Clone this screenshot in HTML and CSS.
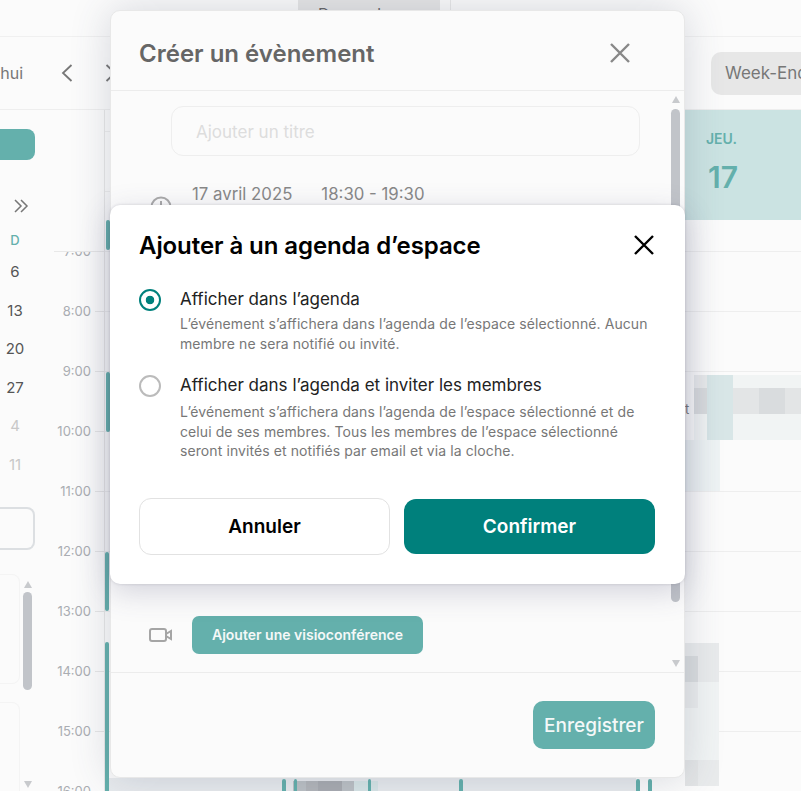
FILE: index.html
```html
<!DOCTYPE html>
<html lang="fr">
<head>
    <meta charset="UTF-8">
    <meta name="viewport" content="width=device-width, initial-scale=1.0">
    <title>Créer un évènement</title>
    <link rel="stylesheet" href="styles.css">
</head>
<body>
    <div class="app">
        <header class="topbar">
            <div class="top-btn">Demander</div>
            <div class="top-divider"></div>
        </header>
        <div class="toolbar">
            <div class="today-clip"><span>Aujourd’hui</span></div>
            <svg class="nav-chevron" width="12" height="18" viewBox="0 0 12 18"><path d="M10.5 1 2 9l8.5 8"/></svg>
            <svg class="nav-chevron" width="12" height="18" viewBox="0 0 12 18"><path d="M1.5 1 10 9l-8.5 8"/></svg>
            <div class="view-btn">Week-End</div>
        </div>
        <div class="main">
            <aside class="sidebar">
                <div class="side-new"></div>
                <svg class="side-next" width="15" height="14" viewBox="0 0 15 14"><path d="M1 1l6 6-6 6M7 1l6 6-6 6"/></svg>
                <div class="mini-day mini-head">D</div>
                <div class="mini-day">6</div>
                <div class="mini-day">13</div>
                <div class="mini-day">20</div>
                <div class="mini-day">27</div>
                <div class="mini-day faded">4</div>
                <div class="mini-day faded">11</div>
                <div class="side-box"></div>
                <div class="side-list">
                    <div class="side-cards">
                        <div class="side-card"></div>
                        <div class="side-card"></div>
                    </div>
                    <div class="scrollbar side-scroll">
                        <span class="arrow-up"></span>
                        <span class="thumb"></span>
                        <span class="arrow-down"></span>
                    </div>
                </div>
            </aside>
            <div class="times">
                <div class="hour"><span>7:00</span><i></i></div>
                <div class="hour"><span>8:00</span><i></i></div>
                <div class="hour"><span>9:00</span><i></i></div>
                <div class="hour"><span>10:00</span><i></i></div>
                <div class="hour"><span>11:00</span><i></i></div>
                <div class="hour"><span>12:00</span><i></i></div>
                <div class="hour"><span>13:00</span><i></i></div>
                <div class="hour"><span>14:00</span><i></i></div>
                <div class="hour"><span>15:00</span><i></i></div>
                <div class="hour"><span>16:00</span><i></i></div>
            </div>
            <div class="days">
                <div class="day">
                    <div class="event-bar bar-a"></div>
                    <div class="event-bar bar-b"></div>
                    <div class="event-bar bar-c"></div>
                    <div class="event-bar bar-d"></div>
                </div>
                <div class="day">
                    <div class="event-bar bar-e"></div>
                    <div class="low-event">
                        <b class="s6"></b><b class="s7"></b><b class="s8"></b><b class="s8"></b><b class="s6"></b><b class="s5"></b><b class="s5"></b>
                    </div>
                    <div class="event-bar bar-g"></div>
                    <div class="event-bar bar-h"></div>
                </div>
                <div class="day">
                    <div class="event-bar bar-e"></div>
                </div>
                <div class="day today">
                    <div class="day-head">
                        <div class="day-name">JEU.</div>
                        <div class="day-num">17</div>
                    </div>
                    <div class="event-bar bar-e"></div>
                    <div class="event-bar bar-f"></div>
                    <div class="event-block"></div>
                    <div class="event-label">t</div>
                    <div class="mosaic mosaic-top">
                        <b class="s3"></b><b class="s5"></b><b class="s4"></b><b class="s4"></b><b class="s4"></b>
                        <b class="s1"></b><b class="s5"></b><b class="s2"></b><b class="s1"></b><b class="s2"></b>
                        <b class="s1"></b><b class="s5"></b><b class="s2"></b><b class="s1"></b><b class="s2"></b>
                        <b class="s4"></b><b class="s5"></b><b class="s4"></b><b class="s4"></b><b class="s4"></b>
                    </div>
                    <div class="mosaic-tail"></div>
                    <div class="mosaic mosaic-low">
                        <b class="s3"></b><b class="s3"></b>
                        <b class="s1"></b><b class="s3"></b>
                        <b class="s3"></b><b class="s4"></b>
                        <b class="s4"></b><b class="s4"></b>
                        <b class="s4"></b><b class="s4"></b>
                        <b class="s2"></b><b class="s3"></b>
                    </div>
                </div>
            </div>
        </div>
    </div>

    <section class="modal modal-event">
        <div class="modal-head">
            <h2>Créer un évènement</h2>
            <svg class="close-grey" width="22" height="22" viewBox="0 0 22 22"><path d="M2 2l18 18M20 2 2 20"/></svg>
        </div>
        <div class="modal-body">
            <div class="form">
                <div class="title-input">Ajouter un titre</div>
                <div class="date-row">
                    <svg class="clock" width="22" height="22" viewBox="0 0 22 22"><circle cx="11" cy="11" r="9.5"/><path d="M11 5v7"/></svg>
                    <span class="date">17 avril 2025</span>
                    <span>18:30 - 19:30</span>
                </div>
                <div class="visio-row">
                    <svg class="camera" width="24" height="16" viewBox="0 0 24 16"><rect x="1" y="2" width="16" height="12" rx="2"/><path d="M17 7l5-3v8l-5-3z"/></svg>
                    <div class="visio-btn">Ajouter une visioconférence</div>
                </div>
            </div>
            <div class="scrollbar modal-scroll">
                <span class="arrow-up"></span>
                <span class="thumb"></span>
                <span class="arrow-down"></span>
            </div>
        </div>
        <div class="modal-foot">
            <div class="save-btn">Enregistrer</div>
        </div>
    </section>

    <section class="modal modal-agenda">
        <div class="agenda-head">
            <h2>Ajouter à un agenda d’espace</h2>
            <svg class="close-black" width="22" height="22" viewBox="0 0 22 22"><path d="M2 2l18 18M20 2 2 20"/></svg>
        </div>
        <div class="option">
            <span class="radio checked"></span>
            <div>
                <div class="option-label">Afficher dans l’agenda</div>
                <p class="option-desc">L’événement s’affichera dans l’agenda de l’espace sélectionné. Aucun membre ne sera notifié ou invité.</p>
            </div>
        </div>
        <div class="option">
            <span class="radio"></span>
            <div>
                <div class="option-label">Afficher dans l’agenda et inviter les membres</div>
                <p class="option-desc tight">L’événement s’affichera dans l’agenda de l’espace sélectionné et de celui de ses membres. Tous les membres de l’espace sélectionné seront invités et notifiés par email et via la cloche.</p>
            </div>
        </div>
        <div class="agenda-actions">
            <button class="btn btn-cancel">Annuler</button>
            <button class="btn btn-confirm">Confirmer</button>
        </div>
    </section>
</body>
</html>
```
FILE: styles.css
```css
* {
    box-sizing: border-box;
}
html, body {
    height: 100%;
}
body {
    margin: 0;
    overflow: hidden;
    background: #fbfbfb;
    font-family: Inter, "Liberation Sans", sans-serif;
    color: #222;
}
.app {
    height: 791px;
    display: flex;
    flex-direction: column;
    overflow: hidden;
}

/* top bars */
.topbar {
    height: 37px;
    flex: none;
    border-bottom: 1px solid #f0f0f0;
    padding-left: 298px;
    display: flex;
    align-items: flex-start;
}
.top-btn {
    width: 142px;
    height: 10px;
    padding-left: 20px;
    background: #e6e6e6;
    color: #666;
    font-size: 16px;
    line-height: 28px;
    overflow: hidden;
}
.top-divider {
    width: 1px;
    height: 10px;
    margin-left: 10px;
    background: #e8e8e8;
}
.toolbar {
    height: 73px;
    flex: none;
    display: flex;
    align-items: center;
    border-bottom: 1px solid #eeeeee;
}
.today-clip {
    width: 23px;
    display: flex;
    justify-content: flex-end;
    overflow: hidden;
    color: #777;
    font-size: 16px;
}
.today-clip span {
    flex: none;
}
.nav-chevron {
    fill: none;
    stroke: #777;
    stroke-width: 1.8;
    margin-left: 38px;
}
.nav-chevron + .nav-chevron {
    margin-left: 32px;
}
.view-btn {
    margin-left: auto;
    margin-right: -10px;
    width: 100px;
    height: 43px;
    padding-left: 14px;
    background: #e7e7e7;
    border-radius: 10px 0 0 10px;
    color: #777;
    font-size: 17px;
    line-height: 43px;
    white-space: nowrap;
    overflow: hidden;
}

/* left column */
.main {
    flex: 1;
    display: flex;
    min-height: 0;
}
.sidebar {
    width: 54px;
    flex: none;
    padding-top: 19px;
}
.side-new {
    width: 35px;
    height: 31px;
    background: #64b0ac;
    border-radius: 0 8px 8px 0;
}
.side-next {
    display: block;
    margin: 39px 0 0 14px;
    fill: none;
    stroke: #777;
    stroke-width: 1.5;
}
.mini-day {
    width: 30px;
    height: 38.5px;
    line-height: 38.5px;
    text-align: center;
    font-size: 15px;
    color: #555;
}
.mini-day.mini-head {
    height: 20px;
    line-height: 20px;
    margin-top: 17px;
    margin-bottom: 3px;
    font-size: 13px;
    font-weight: 500;
    color: #64b0ac;
}
.mini-day.faded {
    color: #c8c8c8;
}
.side-box {
    width: 35px;
    height: 43px;
    margin-top: 23px;
    border: 2px solid #dcdfe2;
    border-left: 0;
    border-radius: 0 8px 8px 0;
}
.side-list {
    display: flex;
    margin-top: 31px;
    height: 207px;
}
.side-cards {
    width: 20px;
    flex: none;
    display: flex;
    flex-direction: column;
    gap: 18px;
    margin-top: -7px;
}
.side-card {
    height: 110px;
    flex: none;
    border: 1px solid #f4f4f4;
    border-left: 0;
    border-radius: 0 8px 8px 0;
}
.side-scroll {
    margin-left: 3px;
}

/* scrollbars */
.scrollbar {
    width: 9px;
    flex: none;
    display: flex;
    flex-direction: column;
    align-items: center;
}
.thumb {
    display: block;
    width: 9px;
    background: #c1c4c9;
    border-radius: 5px;
}
.arrow-up, .arrow-down {
    display: block;
    width: 0;
    height: 0;
    border-left: 4.5px solid transparent;
    border-right: 4.5px solid transparent;
}
.arrow-up {
    border-bottom: 7px solid #c8cacd;
}
.arrow-down {
    margin-top: auto;
    border-top: 7px solid #c8cacd;
}
.side-scroll .thumb {
    height: 98px;
    margin-top: 4px;
}
.modal-scroll {
    margin: 5px 4px 0 0;
}
.modal-scroll .thumb {
    height: 493px;
    margin-top: 6px;
}
.modal-scroll .arrow-down {
    margin-bottom: 5px;
}

/* hours */
.times {
    width: 51px;
    flex: none;
    position: relative;
    padding-top: 111px;
    border-right: 1px solid #e8e8e8;
}
.times::before {
    content: "";
    position: absolute;
    left: 0;
    right: 0;
    top: 0;
    height: 141px;
    background: #fbfbfb;
    border-bottom: 1px solid #e8e8e8;
}
.hour {
    height: 60px;
    display: flex;
    align-items: center;
    justify-content: flex-end;
    gap: 4px;
    font-size: 13px;
    color: #aaadb2;
}
.hour i {
    width: 9px;
    height: 1px;
    background: #e6e6e6;
}

/* days */
.days {
    flex: 1;
    display: flex;
    min-width: 0;
    background-image: linear-gradient(#eeeeee 1px, transparent 1px);
    background-size: 100% 60px;
    background-position: 0 21px;
}
.day {
    width: 177px;
    flex: none;
    position: relative;
}
/* long event running past the bottom of the window */
.day:not(.today)::before {
    content: "";
    position: absolute;
    left: 0;
    right: 0;
    top: 668px;
    height: 13px;
    background: #e8ebee;
}
.day-head {
    height: 110px;
    padding: 20px 0 0 70px;
    background: #cbe3e2;
}
.day-name {
    font-size: 14px;
    font-weight: 600;
    color: #64b0ac;
}
.day-num {
    margin: 12px 0 0 2px;
    font-size: 30px;
    font-weight: 600;
    color: #64b0ac;
}
.event-bar {
    position: absolute;
    width: 4px;
    background: #64b0ac;
    border-radius: 2px;
}
.bar-a { left: 1px; top: 110px; height: 30px; }
.bar-b { left: 1px; top: 262px; height: 60px; }
.bar-c { left: 0; top: 442px; height: 59px; }
.bar-d { left: 0; top: 532px; height: 160px; }
.bar-e { left: 0; top: 669px; height: 30px; }
.bar-f { left: 12px; top: 669px; height: 30px; }
.bar-g { left: 12px; top: 669px; height: 30px; width: 3px; }
.bar-h { left: 86px; top: 669px; height: 30px; width: 3px; }
.low-event {
    position: absolute;
    left: 11px;
    top: 671px;
    width: 85px;
    height: 12px;
    background: #d5e6e6;
    display: grid;
    grid-template-columns: 13px repeat(6, 12px);
}
.event-block {
    position: absolute;
    left: 49px;
    top: 262px;
    width: 128px;
    height: 60px;
    background: #fbfbfb;
}
.event-label {
    position: absolute;
    left: 49px;
    top: 291px;
    font-size: 13px;
    color: #777;
}
.mosaic {
    position: absolute;
    display: grid;
}
.mosaic-top {
    left: 58px;
    top: 265px;
    grid-template-columns: 13px 26px 26px 26px 26px;
    grid-template-rows: 13px 13px 13px 26px;
}
.mosaic-tail {
    position: absolute;
    left: 49px;
    top: 330px;
    width: 35px;
    height: 51px;
    background: #eef3f4;
}
.mosaic-low {
    left: 49px;
    top: 533px;
    grid-template-columns: 13px 21px;
    grid-template-rows: 13px 26px 26px 26px 26px 26px;
}
.s1 { background: #d9dcde; }
.s2 { background: #e3e5e6; }
.s3 { background: #e9ebec; }
.s4 { background: #f1f4f4; }
.s5 { background: #d8e6e7; }
.s6 { background: #bcc1c5; }
.s7 { background: #b3b6ba; }
.s8 { background: #a9acb1; }

/* dialogs */
.modal {
    position: absolute;
    left: 110px;
    width: 575px;
    border-radius: 10px;
}
.modal-event {
    top: 10px;
    height: 768px;
    display: flex;
    flex-direction: column;
    background: #fbfbfb;
    border: 1px solid #e8e8e8;
    box-shadow: 0 0 40px rgba(60, 70, 100, 0.2);
}
.modal-head {
    height: 80px;
    flex: none;
    display: flex;
    align-items: center;
    justify-content: space-between;
    padding: 5px 53px 0 28px;
    border-bottom: 1px solid #ececec;
}
.modal-head h2 {
    margin: 0;
    font-size: 24px;
    font-weight: 600;
    color: #666;
}
.close-grey, .close-black {
    fill: none;
    stroke-width: 2.4;
}
.close-grey {
    stroke: #888;
}
.close-black {
    stroke: #000;
}
.modal-body {
    flex: 1;
    display: flex;
    min-height: 0;
}
.form {
    flex: 1;
    display: flex;
    flex-direction: column;
    padding: 15px 0 18px 0;
}
.title-input {
    height: 50px;
    margin: 0 31px 0 60px;
    padding-left: 24px;
    border: 1px solid #eeeeee;
    border-radius: 12px;
    font-size: 17px;
    line-height: 50px;
    color: #dddddd;
}
.date-row {
    display: flex;
    position: relative;
    margin: 28px 0 0 81px;
    font-size: 16.8px;
    color: #888;
}
.date {
    margin-right: 29px;
}
.clock {
    position: absolute;
    left: -42px;
    top: 12px;
    fill: none;
    stroke: #aaa;
    stroke-width: 2;
}
.visio-row {
    margin-top: auto;
    display: flex;
    align-items: center;
    padding-left: 38px;
    gap: 19px;
}
.camera {
    fill: none;
    stroke: #a5a5a5;
    stroke-width: 2;
}
.visio-btn {
    width: 231px;
    height: 38px;
    background: #64b0ac;
    border-radius: 7px;
    color: #f4f8f8;
    font-size: 14px;
    font-weight: 600;
    line-height: 38px;
    text-align: center;
}
.modal-foot {
    height: 105px;
    flex: none;
    border-top: 1px solid #ececec;
    padding: 28px 29px 0 0;
    display: flex;
    justify-content: flex-end;
    align-items: flex-start;
}
.save-btn {
    width: 122px;
    height: 48px;
    background: #64b0ac;
    border-radius: 10px;
    color: #f4f8f8;
    font-size: 19px;
    font-weight: 500;
    line-height: 50px;
    text-align: center;
}
.modal-agenda {
    top: 205px;
    height: 379px;
    padding: 0 30px 0 29px;
    background: #fff;
    box-shadow: 0 0 3px rgba(60, 60, 80, 0.2), 0 8px 30px rgba(70, 70, 110, 0.22);
}
.agenda-head {
    height: 80px;
    display: flex;
    align-items: center;
    justify-content: space-between;
}
.agenda-head h2 {
    margin: 0;
    font-size: 24px;
    letter-spacing: -0.08px;
    font-weight: 600;
    color: #000;
}
.option {
    display: flex;
    gap: 19px;
    margin-bottom: 17px;
}
.radio {
    width: 22px;
    height: 22px;
    flex: none;
    margin-top: 4px;
    border: 2px solid #bbbbbb;
    border-radius: 50%;
    background: #fff;
}
.radio.checked {
    border-color: #00807c;
    background: radial-gradient(circle, #00807c 0 4px, #fff 4.6px);
}
.option-label {
    font-size: 17px;
    line-height: 28px;
    color: #222;
}
.option-desc {
    margin: 1px 0 0 0;
    font-size: 14px;
    letter-spacing: 0.09px;
    line-height: 20px;
    color: #777;
}
.option-desc.tight {
    margin-top: 3px;
    line-height: 19.5px;
}
.agenda-actions {
    display: flex;
    gap: 14px;
    align-items: center;
    margin-top: 37px;
}
.btn {
    width: 251px;
    flex: none;
    font-family: inherit;
    font-size: 19px;
    font-weight: 600;
    border-radius: 12px;
}
.btn-cancel {
    height: 57px;
    background: #fff;
    border: 1px solid #e2e2e2;
    color: #000;
}
.btn-confirm {
    height: 55px;
    background: #00807c;
    border: 0;
    color: #fff;
}
```
